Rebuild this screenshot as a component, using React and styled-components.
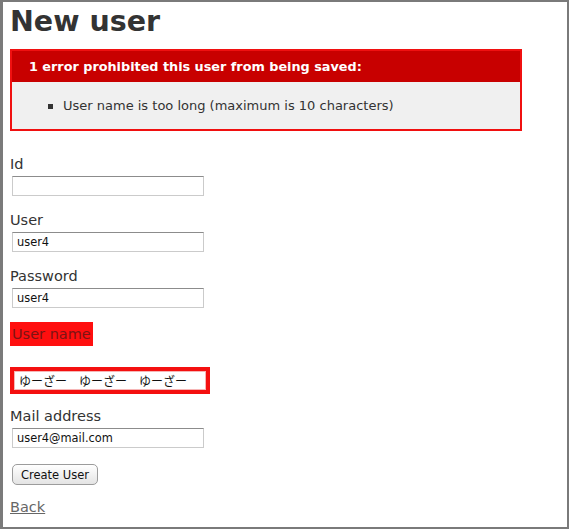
import React from 'react';
import styled, { createGlobalStyle } from 'styled-components';

const GlobalStyle = createGlobalStyle`
  html, body {
    margin: 0;
    padding: 0;
    background: #fff;
  }
  body {
    font-family: 'DejaVu Sans', Verdana, sans-serif;
    color: #333;
  }
`;

const Frame = styled.div`
  box-sizing: border-box;
  width: 569px;
  height: 529px;
  border: 2px solid #7a7a7a;
  border-left-width: 3px;
  padding: 5px 0 0 7px;
  overflow: hidden;
`;

const Title = styled.h1`
  margin: 0;
  font-size: 28.5px;
  line-height: 29px;
  font-weight: bold;
  color: #333;
`;

const ErrorBox = styled.div`
  box-sizing: border-box;
  width: 512px;
  margin-top: 13px;
  border: 2px solid #f01010;
  background: #f0f0f0;
`;

const ErrorHeader = styled.h2`
  margin: 0;
  height: 31px;
  line-height: 31px;
  padding-left: 17px;
  background: #c80000;
  color: #fff;
  font-size: 12.8px;
  font-weight: bold;
`;

const ErrorList = styled.ul`
  margin: 0;
  height: 47px;
  padding: 0 0 0 51px;
  list-style: none;
  display: flex;
  flex-direction: column;
  justify-content: center;
`;

const ErrorItem = styled.li`
  position: relative;
  font-size: 13px;
  line-height: 16px;
  color: #333;

  &::before {
    content: '';
    position: absolute;
    left: -15px;
    top: 6px;
    width: 5px;
    height: 5px;
    background: #333;
  }
`;

const Form = styled.form`
  display: flex;
  flex-direction: column;
  align-items: flex-start;
  margin-top: 24px;
`;

const Field = styled.div`
  display: flex;
  flex-direction: column;
  align-items: flex-start;
  margin-top: ${(p) => p.$gap ?? 15}px;
`;

const Label = styled.label`
  font-size: 14.5px;
  line-height: 18px;
  color: #333;
`;

const ErrorLabel = styled.div`
  padding: 3px 2px;
  background: #ff0f0f;

  ${Label} {
    display: block;
    color: #7c1414;
  }
`;

const TextInput = styled.input`
  box-sizing: border-box;
  width: 192px;
  height: 20px;
  margin: 3px 0 0 2px;
  padding: 0 4px;
  border: 1px solid #cbcbcb;
  border-top-color: #8c8c8c;
  background: #fff;
  font-family: 'DejaVu Sans', 'Noto Sans CJK JP', sans-serif;
  font-size: 11.4px;
  color: #111;
  outline: none;
`;

const ErrorInputWrap = styled.div`
  margin-top: 21px;
  padding: 4px;
  background: #f41010;

  ${TextInput} {
    margin: 0;
    height: 19px;
    border: 1px solid #f6b6b6;
    font-family: 'Noto Sans CJK JP', 'DejaVu Sans', sans-serif;
    font-size: 12px;
  }
`;

const Button = styled.button`
  box-sizing: border-box;
  margin: 16px 0 0 2px;
  width: 86px;
  height: 21px;
  padding: 0;
  border: 1px solid #9c9c9c;
  border-radius: 5px;
  background: linear-gradient(#ffffff, #e4e4e4);
  font-family: 'DejaVu Sans', Verdana, sans-serif;
  font-size: 11.5px;
  color: #111;
`;

const BackLink = styled.a`
  margin-top: 13px;
  font-size: 14.5px;
  line-height: 18px;
  color: #666;
  text-decoration: underline;
`;

const fields = [
  { label: 'Id', value: '', gap: 0 },
  { label: 'User', value: 'user4' },
  { label: 'Password', value: 'user4' },
];

export default function App() {
  return (
    <>
      <GlobalStyle />
      <Frame>
        <Title>New user</Title>
        <ErrorBox>
          <ErrorHeader>1 error prohibited this user from being saved:</ErrorHeader>
          <ErrorList>
            <ErrorItem>User name is too long (maximum is 10 characters)</ErrorItem>
          </ErrorList>
        </ErrorBox>
        <Form onSubmit={(e) => e.preventDefault()}>
          {fields.map((f) => (
            <Field key={f.label} $gap={f.gap}>
              <Label>{f.label}</Label>
              <TextInput defaultValue={f.value} />
            </Field>
          ))}
          <Field $gap={14}>
            <ErrorLabel>
              <Label>User name</Label>
            </ErrorLabel>
            <ErrorInputWrap>
              <TextInput defaultValue="ゆーざー　ゆーざー　ゆーざー" />
            </ErrorInputWrap>
          </Field>
          <Field $gap={13}>
            <Label>Mail address</Label>
            <TextInput defaultValue="user4@mail.com" />
          </Field>
          <Button type="submit">Create User</Button>
          <BackLink href="#">Back</BackLink>
        </Form>
      </Frame>
    </>
  );
}
